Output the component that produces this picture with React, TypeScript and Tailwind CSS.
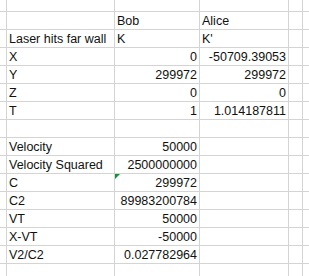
import React from "react";

type Cell = string | number | null;

// rows of the sheet: [A, B, C]
const rows: Cell[][] = [
  [null, null, null],
  [null, "Bob", "Alice"],
  ["Laser hits far wall", "K", "K'"],
  ["X", 0, "-50709.39053"],
  ["Y", 299972, 299972],
  ["Z", 0, 0],
  ["T", 1, "1.014187811"],
  [null, null, null],
  ["Velocity", 50000, null],
  ["Velocity Squared", 2500000000, null],
  ["C", 299972, null],
  ["C2", 89983200784, null],
  ["VT", 50000, null],
  ["X-VT", -50000, null],
  ["V2/C2", "0.027782964", null],
  [null, null, null],
];

const isNum = (v: Cell) => typeof v === "number" || (typeof v === "string" && /^-?[\d.]+$/.test(v));

const SheetCell = ({ value, flag }: { value: Cell; flag?: boolean }) => (
  <div
    className={`relative border-r border-b border-[#d4d4d4] px-[2px] pt-px whitespace-nowrap overflow-hidden ${
      isNum(value) ? "text-right" : "text-left"
    }`}
  >
    {flag && (
      <span className="absolute left-0 top-0 w-0 h-0 border-t-[5px] border-r-[5px] border-t-[#1e8c3a] border-r-transparent" />
    )}
    {value ?? ""}
  </div>
);

export default function App() {
  return (
    <div className="w-[309px] h-[276px] overflow-hidden bg-white text-[12.5px] leading-[17px] text-[#111]" style={{ fontFamily: '"Liberation Sans", Arial, sans-serif' }}>
      <div className="grid grid-cols-[7px_108px_85px_89px_14px_20px] grid-rows-[12px] auto-rows-[18px]">
        {rows.map((r, i) => (
          <React.Fragment key={i}>
            <div className="border-r border-b border-[#d4d4d4]" />
            <SheetCell value={r[0]} />
            <SheetCell value={r[1]} flag={i === 10} />
            <SheetCell value={r[2]} />
            <div className="border-r border-b border-[#d4d4d4]" />
            <div className="border-b border-[#d4d4d4]" />
          </React.Fragment>
        ))}
      </div>
    </div>
  );
}
